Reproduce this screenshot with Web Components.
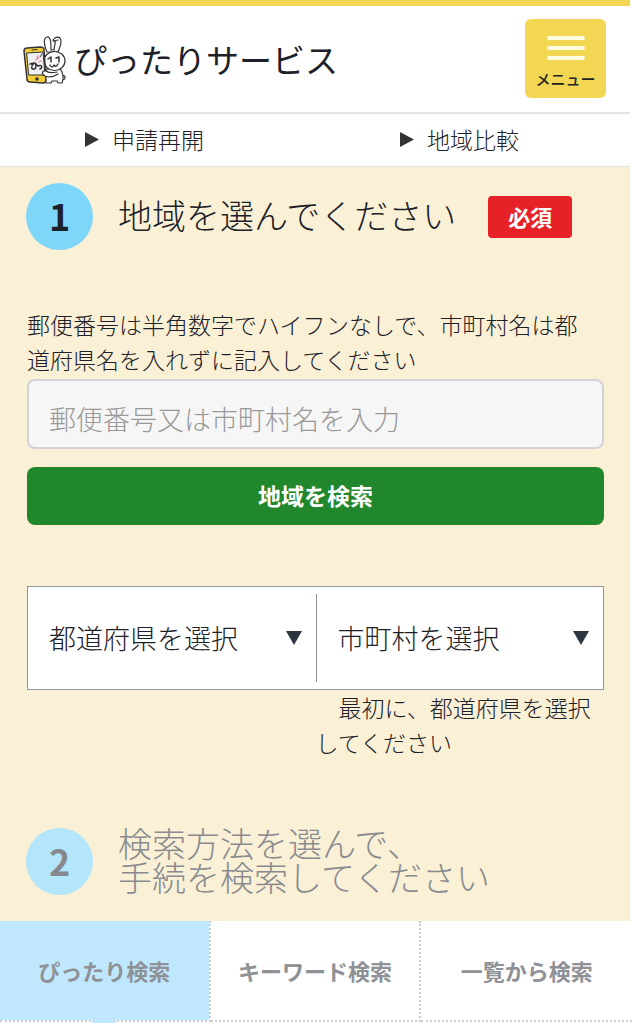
<!DOCTYPE html>
<html lang="ja">
<head>
<meta charset="utf-8">
<meta name="viewport" content="width=device-width, initial-scale=1">
<title>ぴったりサービス</title>
<style>
  body {
    margin: 0;
    padding-right: 2px;
    background: #fff;
    color: #1c2129;
    font-family: "Noto Sans CJK JP", sans-serif;
    font-weight: 300;
    font-size: 23px;
    line-height: 35px;
    --cream: #f9f0d6;
    --yellow: #f4d655;
    --line: #e4e4e4;
  }
  main { background: var(--cream); }
  search-tabs { margin-right: -2px; }
</style>
</head>
<body>
<site-header heading="ぴったりサービス"></site-header>
<sub-nav>
  <nav-link href="#resume">申請再開</nav-link>
  <nav-link href="#compare">地域比較</nav-link>
</sub-nav>
<main>
  <step-heading number="1">地域を選んでください<required-badge slot="badge">必須</required-badge></step-heading>
  <region-form></region-form>
  <step-heading number="2" inactive>検索方法を選んで、<br>手続を検索してください</step-heading>
</main>
<search-tabs tabs='["ぴったり検索","キーワード検索","一覧から検索"]'></search-tabs>

<script>
class SiteHeader extends HTMLElement {
  constructor() {
    super();
    this.attachShadow({ mode: 'open' });
  }

  connectedCallback() {
    this.shadowRoot.innerHTML = `
      <style>
        :host { display: block; border-top: 6px solid var(--yellow); border-bottom: 2px solid var(--line); }
        header { display: flex; align-items: center; justify-content: space-between; padding: 13px 24px 14px 20px; }
        a { display: flex; align-items: center; gap: 6px; color: inherit; text-decoration: none; }
        svg { display: block; }
        h1 { margin: 0; font-size: 33px; line-height: 48px; font-weight: 400; }
        button {
          display: flex;
          flex-direction: column;
          align-items: center;
          gap: 7px;
          box-sizing: border-box;
          width: 81px;
          height: 79px;
          padding: 17px 0 0;
          border: 0;
          border-radius: 6px;
          background: var(--yellow);
          color: #222;
          font: 500 15px/20px "Noto Sans CJK JP", sans-serif;
        }
      </style>
      <header>
        <a href="#top">
          <svg width="48" height="50" viewBox="0 0 48 50" fill="none" stroke="#333" stroke-width="1.2" stroke-linecap="round" stroke-linejoin="round">
            <path fill="#fff" d="M27 18C24 12 23 4 27 3C31 2 31 10 31 16L34 16C34 12 36 9 35 7C33 8 32 6 35 4C39 2 41 4 41 8C41 12 39 15 38 18Z"/>
            <path d="M34 7L38 6"/>
            <path fill="#fff" d="M42 42q3-1 3 1.500t-3 2"/>
            <path fill="#fff" d="M27 35C25 40 24 46 26 49H31L32 47H37L38 49H42C44 44 43 38 39 33Z"/>
            <ellipse cx="34.500" cy="27" rx="10.500" ry="9.500" fill="#fff"/>
            <path fill="#f5cd37" stroke-width="1.500" d="M7 15L20 14Q24 14 24 17L26 47Q26 50 23 50L10 49Q7 49 7 46L4 18Q4 15 7 15Z" transform="translate(0 -1)"/>
            <path fill="#eef0f4" stroke-width="1" d="M7 19L23 18L25 41L9 41Z"/>
            <path d="M12 16L17 15.500"/>
            <circle cx="17" cy="45" r="1.200" fill="#333"/>
            <path stroke-width="1.500" d="M10 30l4-1c-3 3-3 7 0 6c3-1 2-4 1-6l3 3M18 32c4-2 5 2 2 3"/>
            <path stroke="#ee7b91" d="M16 26l2-2m1 4l2-1m-4-4l1-1"/>
            <path stroke-width="1" d="M20 23l2-3"/>
            <path stroke-width="1.500" d="M28 25l3-2v5M36 24l3-1v5"/>
            <path stroke-width="1.400" d="M30 31q2 4 4 0q2 3 4-1"/>
            <path fill="#fff" d="M37 38C32 39 28 39 26 37C22 36 21 40 25 42C30 44 35 42 38 40"/>
          </svg>
          <h1></h1>
        </a>
        <button type="button">
          <svg width="38" height="26" viewBox="0 0 38 26" stroke="#fffcdf" stroke-width="4" stroke-linecap="round" aria-hidden="true">
            <path d="M2 2H36M2 12H36M2 22H36"/>
          </svg>
          <span>メニュー</span>
        </button>
      </header>
    `;
    this.shadowRoot.querySelector('h1').textContent = this.getAttribute('heading');
  }
}
customElements.define('site-header', SiteHeader);

class SubNav extends HTMLElement {
  constructor() {
    super();
    this.attachShadow({ mode: 'open' });
    this.shadowRoot.innerHTML = `
      <style>
        :host { display: block; border-bottom: 1px solid var(--line); }
        nav { display: grid; grid-template-columns: 1fr 1fr; padding: 8px 0 9px; }
      </style>
      <nav><slot></slot></nav>
    `;
  }
}
customElements.define('sub-nav', SubNav);

class NavLink extends HTMLElement {
  constructor() {
    super();
    this.attachShadow({ mode: 'open' });
  }

  connectedCallback() {
    this.shadowRoot.innerHTML = `
      <style>
        :host { display: block; padding-right: 26px; }
        a { display: flex; align-items: center; justify-content: center; gap: 13px; color: inherit; text-decoration: none; }
      </style>
      <a>
        <svg width="14" height="15" viewBox="0 0 14 15" fill="#333" aria-hidden="true"><path d="M0 0L14 7.500L0 15Z"/></svg>
        <slot></slot>
      </a>
    `;
    this.shadowRoot.querySelector('a').href = this.getAttribute('href');
  }
}
customElements.define('nav-link', NavLink);

class StepHeading extends HTMLElement {
  constructor() {
    super();
    this.attachShadow({ mode: 'open' });
  }

  connectedCallback() {
    this.shadowRoot.innerHTML = `
      <style>
        :host { display: flex; align-items: center; padding: 16px 26px 24px; }
        :host([inactive]) { color: #898b8f; }
        .number {
          flex: none;
          width: 67px;
          height: 67px;
          margin-right: 25px;
          border-radius: 50%;
          background: #7ed6f9;
          text-align: center;
          font-size: 36px;
          font-weight: 700;
          line-height: 64px;
        }
        :host([inactive]) .number { background: #b3e5fb; color: #85898e; }
        h2 { margin: 0; padding-bottom: 3px; font-size: 34px; line-height: 34px; font-weight: 300; }
        slot[name="badge"] { display: block; margin-left: 32px; }
      </style>
      <span class="number"></span>
      <h2><slot></slot></h2>
      <slot name="badge"></slot>
    `;
    this.shadowRoot.querySelector('.number').textContent = this.getAttribute('number');
  }
}
customElements.define('step-heading', StepHeading);

class RequiredBadge extends HTMLElement {
  constructor() {
    super();
    this.attachShadow({ mode: 'open' });
    this.shadowRoot.innerHTML = `
      <style>
        :host {
          display: block;
          padding: 0 20px 2px;
          border-radius: 4px;
          background: #e62128;
          color: #fff;
          font-size: 22px;
          font-weight: 700;
          line-height: 40px;
          white-space: nowrap;
        }
      </style>
      <slot></slot>
    `;
  }
}
customElements.define('required-badge', RequiredBadge);

class RegionSelect extends HTMLElement {
  constructor() {
    super();
    this.attachShadow({ mode: 'open' });
  }

  connectedCallback() {
    this.shadowRoot.innerHTML = `
      <style>
        :host { display: grid; align-items: center; }
        select, svg { grid-area: 1 / 1; }
        select {
          appearance: none;
          width: 100%;
          height: 88px;
          padding: 0 40px 0 21px;
          border: 0;
          border-radius: 0;
          background: #fff;
          color: inherit;
          font: 300 27px/40px "Noto Sans CJK JP", sans-serif;
        }
        svg { justify-self: end; margin-right: 14px; pointer-events: none; }
      </style>
      <select><option></option></select>
      <svg width="16" height="14" viewBox="0 0 16 14" fill="#2d3540" aria-hidden="true"><path d="M0 0H16L8 14Z"/></svg>
    `;
    const select = this.shadowRoot.querySelector('select');
    select.setAttribute('aria-label', this.getAttribute('label'));
    select.options[0].textContent = this.getAttribute('label');
  }
}
customElements.define('region-select', RegionSelect);

class RegionForm extends HTMLElement {
  constructor() {
    super();
    this.attachShadow({ mode: 'open' });
    this.shadowRoot.innerHTML = `
      <style>
        :host { display: block; padding: 33px 26px 50px 27px; }
        label { display: block; padding: 0 12px 2px 0; }
        input, button {
          display: block;
          box-sizing: border-box;
          width: 100%;
          border-radius: 8px;
        }
        input {
          height: 70px;
          padding: 8px 20px 0;
          border: 2px solid #d2d2d7;
          background: #f6f6f6;
          color: inherit;
          font: 300 27px/40px "Noto Sans CJK JP", sans-serif;
        }
        input::placeholder { color: #999; opacity: 1; }
        button {
          height: 58px;
          margin: 18px 0 61px;
          padding: 0 0 2px;
          border: 0;
          background: #20872d;
          color: #fff;
          font: 700 23px/35px "Noto Sans CJK JP", sans-serif;
        }
        .selects {
          display: grid;
          grid-template-columns: 1fr 1fr;
          padding: 7px 0;
          border: 1px solid #8f96a2;
          background: #fff;
        }
        .selects > :last-child { border-left: 1px solid #8f96a2; }
        p { margin: 0 0 0 50%; }
      </style>
      <form>
        <label for="region">郵便番号は半角数字でハイフンなしで、市町村名は都道府県名を入れずに記入してください</label>
        <input id="region" type="text" placeholder="郵便番号又は市町村名を入力">
        <button type="button">地域を検索</button>
        <div class="selects">
          <region-select label="都道府県を選択"></region-select>
          <region-select label="市町村を選択"></region-select>
        </div>
        <p>　最初に、都道府県を選択してください</p>
      </form>
    `;
  }
}
customElements.define('region-form', RegionForm);

class SearchTabs extends HTMLElement {
  constructor() {
    super();
    this.attachShadow({ mode: 'open' });
  }

  connectedCallback() {
    const tabs = JSON.parse(this.getAttribute('tabs') || '[]');
    const buttons = tabs.map((name, i) =>
      `<button type="button" role="tab" aria-selected="${i === 0}">${name}</button>`
    ).join('');

    this.shadowRoot.innerHTML = `
      <style>
        :host { display: block; overflow: hidden; padding-bottom: 1px; }
        div { display: grid; grid-template-columns: repeat(3, 1fr); }
        button {
          height: 101px;
          padding: 0 0 2px;
          border: 0;
          border-right: 2px dotted #ccc;
          border-bottom: 2px dotted #ccc;
          background: #fff;
          color: #8e9195;
          font: 700 22px/32px "Noto Sans CJK JP", sans-serif;
        }
        button:last-child { border-right: 0; }
        button[aria-selected="true"] { position: relative; background: #bfe8fe; background-clip: padding-box; }
        /* tip that points from the chosen tab to its panel */
        button[aria-selected="true"]::after {
          content: "";
          position: absolute;
          left: 50%;
          top: 100%;
          width: 24px;
          height: 4px;
          margin-left: -12px;
          background: #bfe8fe;
        }
      </style>
      <div role="tablist">${buttons}</div>
    `;
  }
}
customElements.define('search-tabs', SearchTabs);
</script>
</body>
</html>
